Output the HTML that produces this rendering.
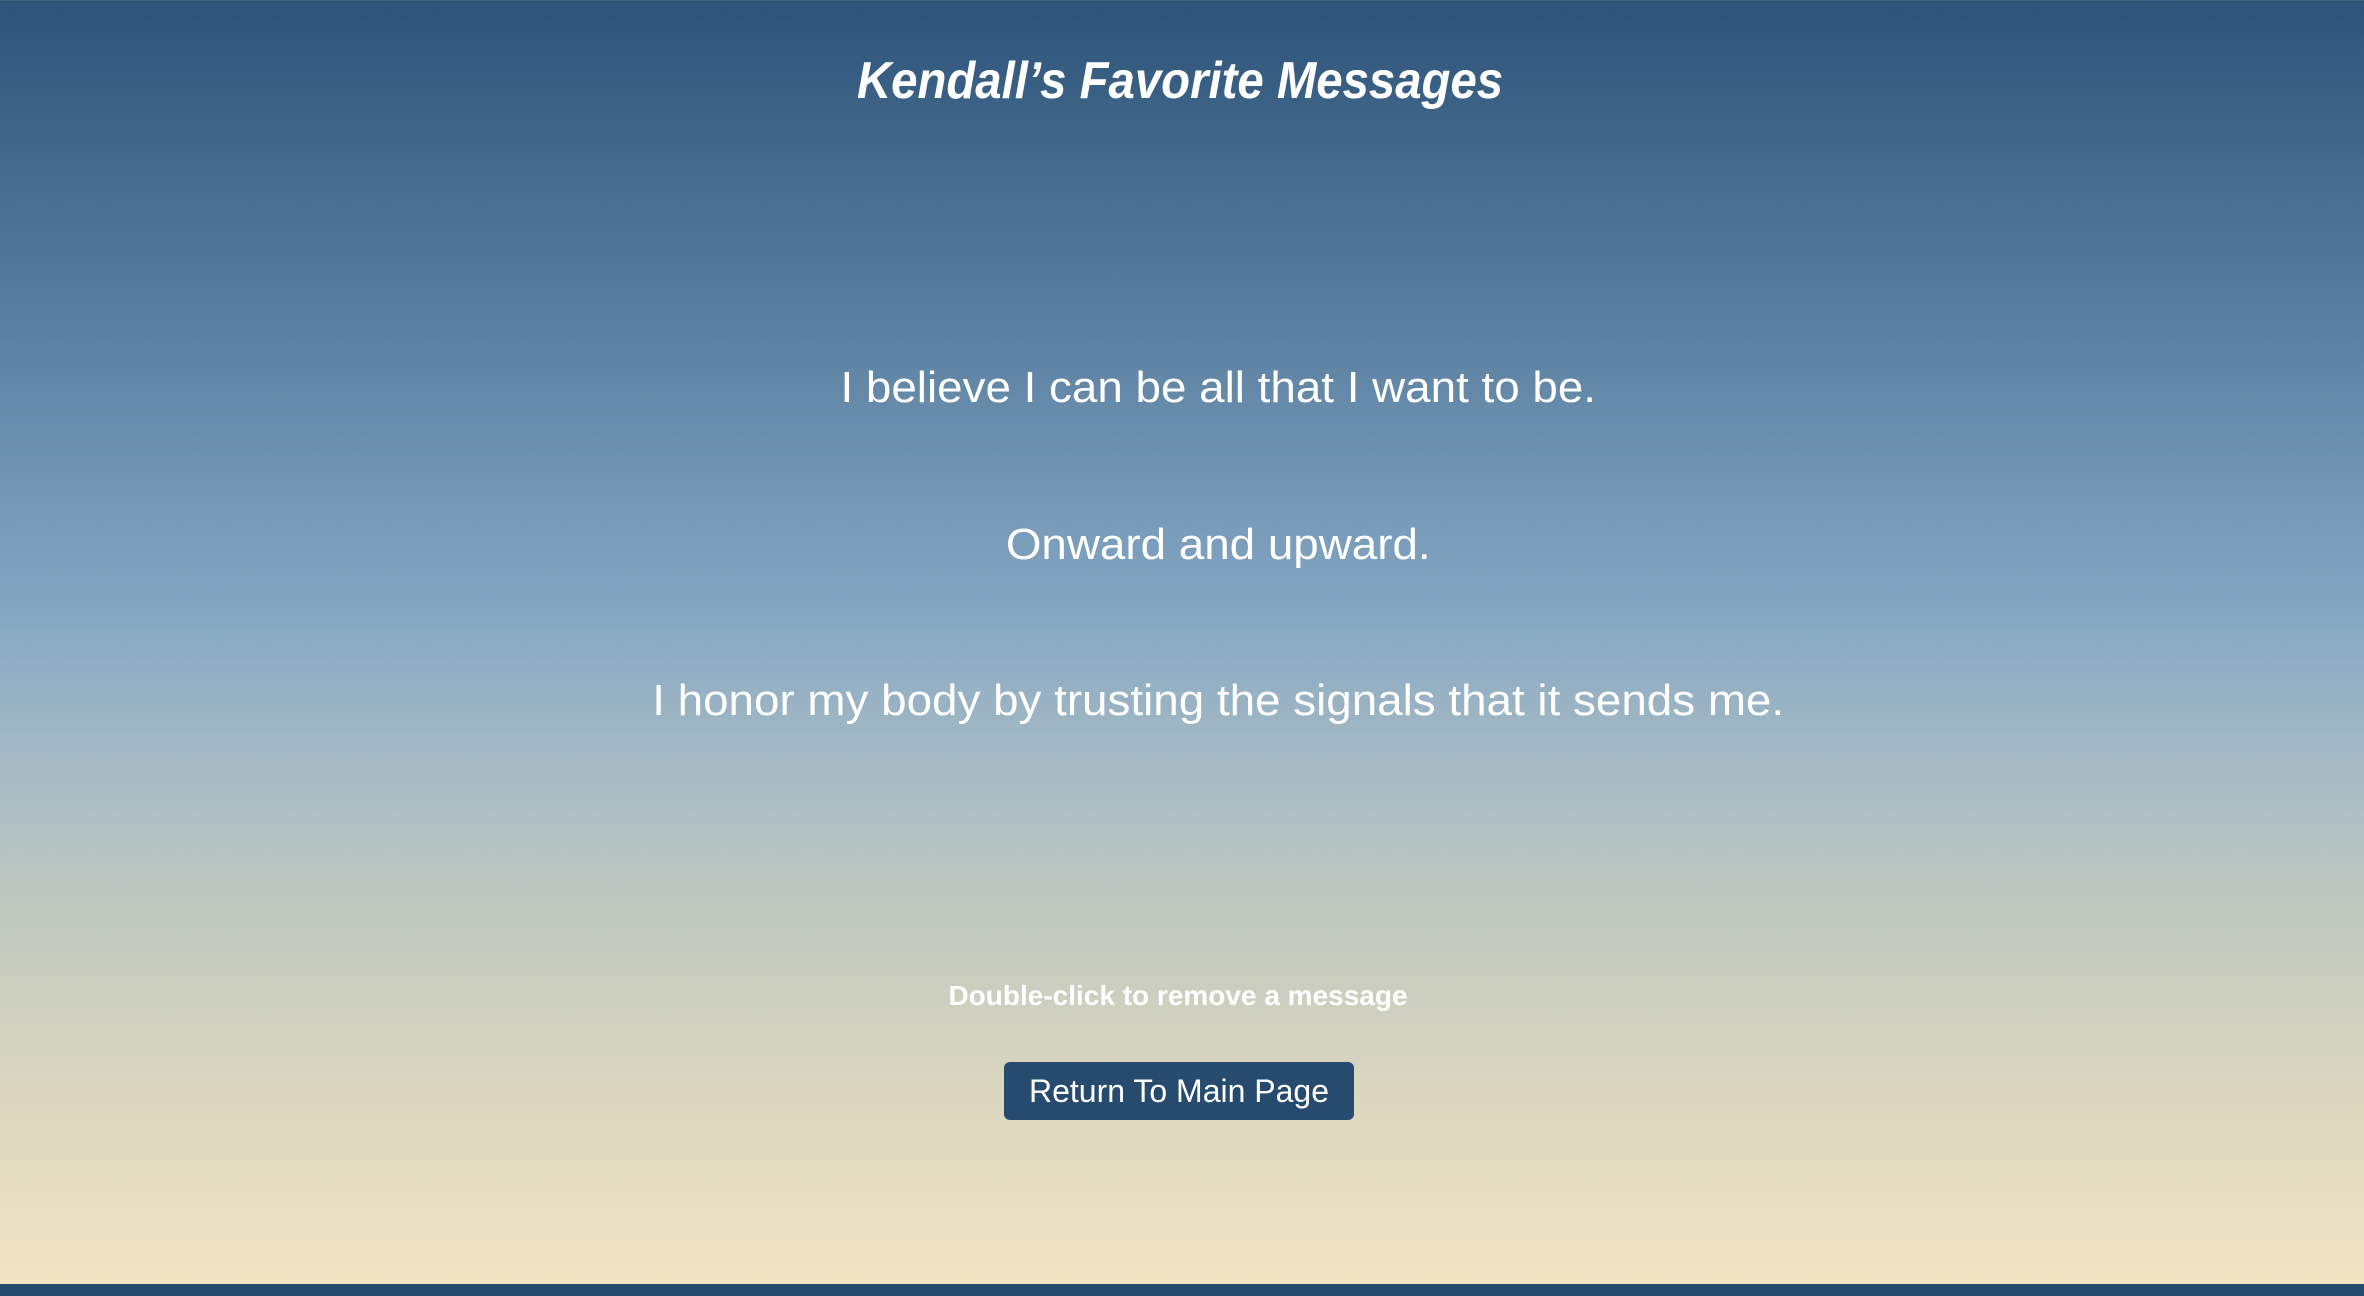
<!DOCTYPE html>
<html><head><style>
html,body{margin:0;padding:0}
body{width:2364px;height:1296px;position:relative;overflow:hidden;font-family:"Liberation Sans",sans-serif;color:#fff;
background:linear-gradient(to bottom,#2c5479 0%,#5b7f9f 25%,#83a7c3 47%,#a9bcc4 60%,#c4cabf 72%,#ddd8c0 86%,#f2e4c3 99%);}
.t{position:absolute;left:0;width:100%;text-align:center;line-height:1;white-space:nowrap}
.t span{display:inline-block}
.m span{transform:scaleX(1.04)}
.bar{position:absolute;left:0;top:1284px;width:2364px;height:12px;background:#264b6f}
.btn{position:absolute;left:1004px;top:1062px;width:350px;height:58px;background:#264b6f;border-radius:6px;font-size:32px;line-height:58px;text-align:center}
</style></head><body>
<div class="t" style="top:55px;font-size:52px;font-weight:bold;font-style:italic;left:-2px;"><span style="transform:scaleX(0.91)">Kendall’s Favorite Messages</span></div>
<div class="t m" style="top:366px;font-size:44px;left:36px"><span>I believe I can be all that I want to be.</span></div>
<div class="t m" style="top:523px;font-size:44px;left:36px"><span>Onward and upward.</span></div>
<div class="t m" style="top:679px;font-size:44px;left:36px"><span>I honor my body by trusting the signals that it sends me.</span></div>
<div class="t" style="top:982px;font-size:28px;font-weight:bold;left:-4px">Double-click to remove a message</div>
<div class="btn">Return To Main Page</div>
<div class="bar"></div>
</body></html>
